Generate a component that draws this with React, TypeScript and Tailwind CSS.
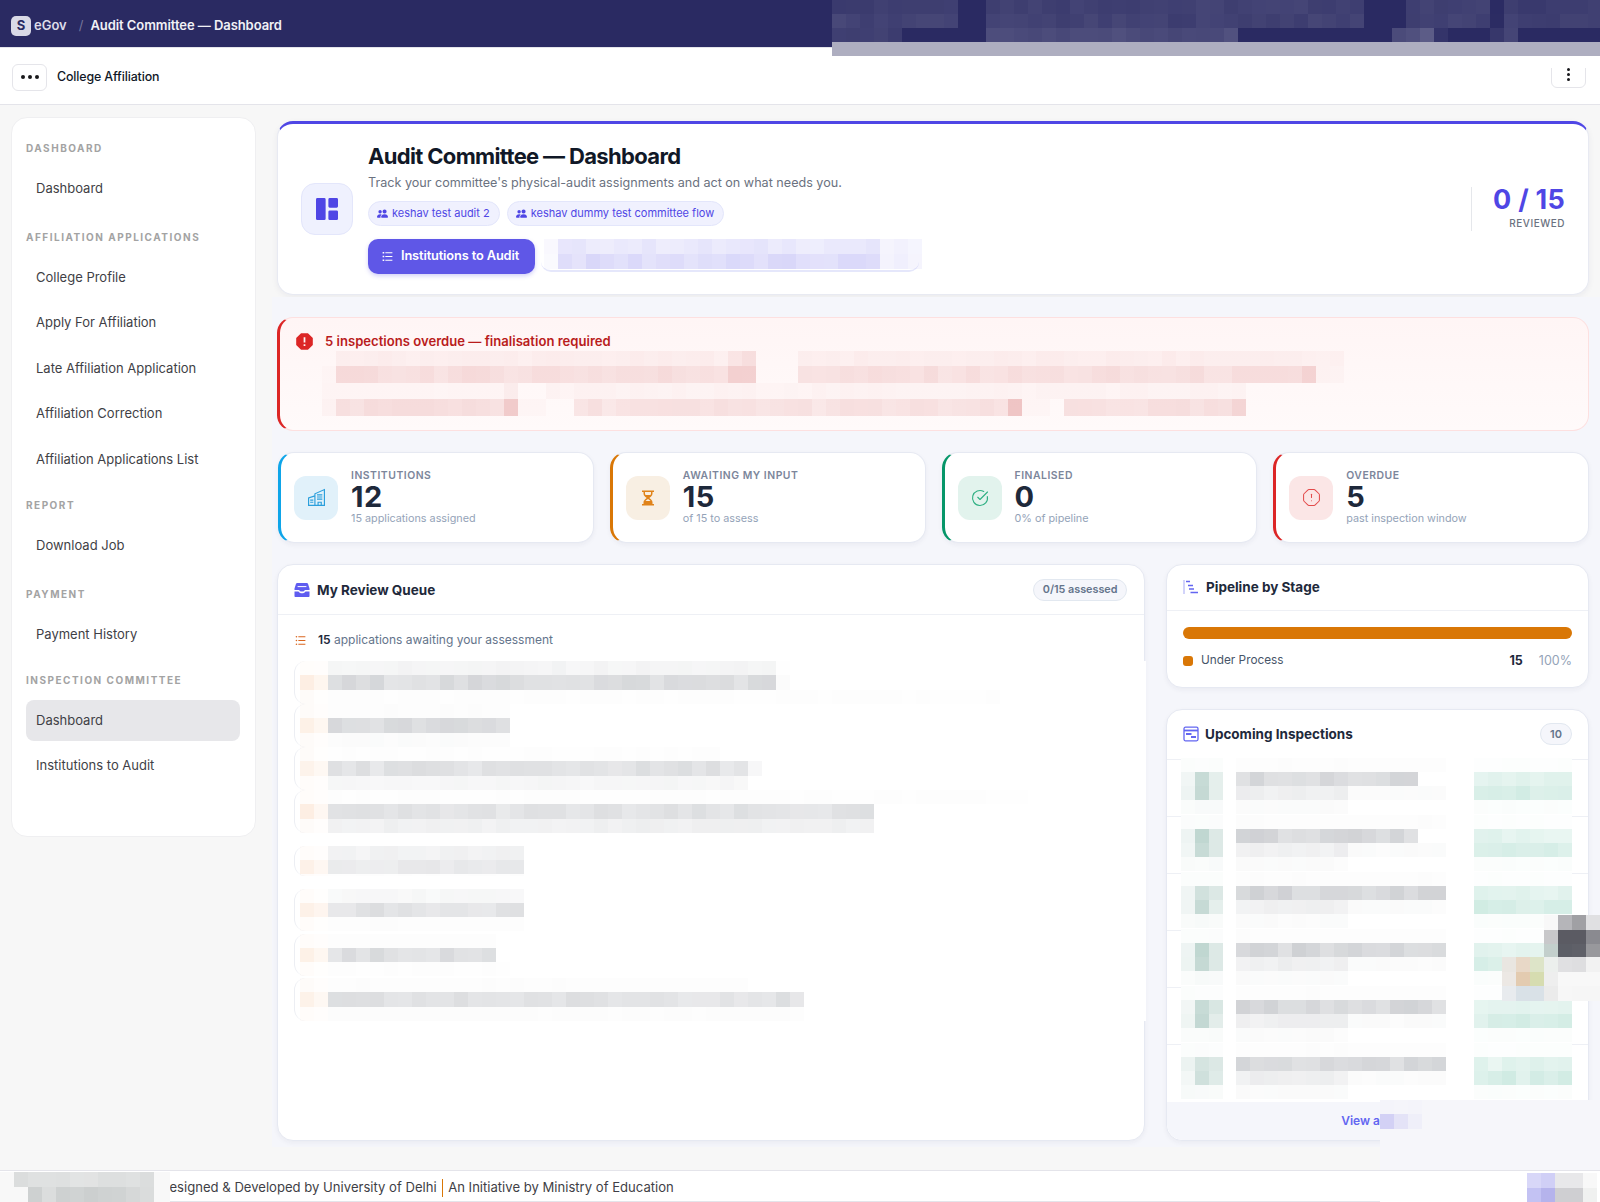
import { BsGrid1X2Fill, BsPeopleFill } from 'react-icons/bs'
import { RiHourglassFill, RiListCheck, RiListUnordered, RiSpam2Fill } from 'react-icons/ri'
import { CircleCheckBig, OctagonAlert } from 'lucide-react'

type Band = { h: number; runs: [number, number][] }

const noise = (n: number) => {
  const v = Math.sin(n * 12.9898) * 43758.5453
  return v - Math.floor(v)
}

// pixelated block, standing in for what is blurred out in the picture
function Mosaic({
  bands,
  rgb = '110,115,125',
  seed = 1,
  cell = 14
}: {
  bands: Band[]
  rgb?: string
  seed?: number
  cell?: number
}) {
  return (
    <div className="flex flex-col">
      {bands.map((band, b) => {
        let i = 0
        return (
          <div key={b} className="flex" style={{ height: band.h }}>
            {band.runs.flatMap(([count, alpha], r) =>
              Array.from({ length: count }).map((_, c) => {
                i += 1
                const a = alpha * (0.78 + 0.44 * noise(seed * 31 + b * 97 + i))
                return (
                  <div
                    key={`${r}-${c}`}
                    className="shrink-0"
                    style={{ width: cell, backgroundColor: `rgba(${rgb},${a})` }}
                  />
                )
              })
            )}
          </div>
        )
      })}
    </div>
  )
}

const menu = [
  { label: 'Dashboard', items: ['Dashboard'], top: 'mt-0' },
  {
    label: 'Affiliation Applications',
    items: [
      'College Profile',
      'Apply For Affiliation',
      'Late Affiliation Application',
      'Affiliation Correction',
      'Affiliation Applications List'
    ],
    top: 'mt-[20px]'
  },
  { label: 'Report', items: ['Download Job'], top: 'mt-[17px]' },
  { label: 'Payment', items: ['Payment History'], top: 'mt-[20px]' },
  {
    label: 'Inspection Committee',
    items: ['Dashboard', 'Institutions to Audit'],
    top: 'mt-[17px]',
    active: 0
  }
]

function Sidebar() {
  return (
    <aside className="h-[720px] w-[245px] shrink-0 rounded-2xl border border-[#efeff1] bg-white pl-[14px] pr-[15px] pt-[22px]">
      {menu.map((group) => (
        <div key={group.label} className={group.top}>
          <div className="mb-3 h-4 text-[10px] font-bold uppercase leading-4 tracking-[0.15em] text-[#a3a3a3]">
            {group.label}
          </div>
          <div className="flex flex-col gap-[4.5px]">
            {group.items.map((item, i) => (
              <div
                key={item}
                className={`flex h-[41px] items-center rounded-lg px-[10px] text-[13px] text-[#3f3f46] ${
                  group.active === i ? 'bg-[#e7e7ea]' : ''
                }`}
              >
                {item}
              </div>
            ))}
          </div>
        </div>
      ))}
    </aside>
  )
}

function Chip({ text }: { text: string }) {
  return (
    <span className="flex h-[25px] items-center gap-[4px] rounded-full border border-[#e3e6fb] bg-[#f0f1fe] pl-[8px] pr-[9px] text-[11px] text-[#4f46e5]">
      <BsPeopleFill className="h-[11px] w-[11px]" />
      {text}
    </span>
  )
}

function Hero() {
  return (
    <section className="flex h-[174px] items-center rounded-2xl border border-t-[3px] border-[#e8eaf2] border-t-[#4f46e5] bg-white pl-[23px] pr-[23px] shadow-[0_2px_6px_rgba(30,41,80,0.06)]">
      <div className="flex h-[52px] w-[52px] shrink-0 items-center justify-center rounded-[14px] border border-[#e3e6fb] bg-[#eff1fe] text-[#4f46e5]">
        <BsGrid1X2Fill className="h-[22px] w-[22px]" />
      </div>
      <div className="ml-[15px] flex h-full flex-col pt-[18px]">
        <h1 className="h-7 text-[22px] font-bold leading-7 tracking-[-0.03em] text-[#111827]">
          Audit Committee — Dashboard
        </h1>
        <p className="mt-[4px] h-[18px] text-[12.6px] leading-[18px] text-[#6b7280]">
          Track your committee's physical-audit assignments and act on what needs you.
        </p>
        <div className="mt-[9px] flex gap-[7px]">
          <Chip text="keshav test audit 2" />
          <Chip text="keshav dummy test committee flow" />
        </div>
        <div className="mt-[13px] flex">
          <button className="flex h-[35px] w-[167px] items-center gap-[7px] rounded-[10px] bg-[#5f57e7] pb-[1px] pl-[13px] text-[12.8px] font-semibold tracking-[-0.01em] text-white shadow-[0_2px_4px_rgba(79,70,229,0.25)]">
            <RiListCheck className="h-[13px] w-[13px]" />
            Institutions to Audit
          </button>
          <div className="ml-[6px] h-[33px] w-[378px] rounded-[10px] border-b-2 border-[#e5e7fb] pl-[3px]">
            <Mosaic
              rgb="79,70,229"
              seed={3}
              cell={14}
              bands={[
                { h: 15, runs: [[1, 0.03], [23, 0.12], [3, 0.06]] },
                { h: 15, runs: [[1, 0.03], [23, 0.18], [3, 0.07]] }
              ]}
            />
          </div>
        </div>
      </div>
      <div className="ml-auto h-[44px] w-[94px] border-l border-[#e5e7eb] text-right">
        <div className="-mt-[2px] text-[27px] font-bold leading-[30px] tracking-[0.01em] text-[#4f46e5]">
          0 / 15
        </div>
        <div className="text-[10px] font-medium uppercase leading-4 tracking-[0.05em] text-[#6b7280]">
          Reviewed
        </div>
      </div>
    </section>
  )
}

function Alert() {
  return (
    <section className="h-[114px] rounded-2xl border border-l-[3px] border-[#fde0e0] border-l-[#dc2626] bg-linear-to-b from-[#fff5f5] to-[#fffafa] pl-[14px] pr-4 pt-[14px]">
      <div className="flex h-[18px] items-center gap-[10px]">
        <RiSpam2Fill className="h-[21px] w-[21px] text-[#dc2626]" />
        <span className="text-[13.1px] font-semibold leading-[18px] text-[#b91c1c]">
          5 inspections overdue — finalisation required
        </span>
      </div>
      <div className="ml-[28px] mt-[1px]">
        <Mosaic
          rgb="200,70,70"
          seed={5}
          cell={14}
          bands={[
            { h: 15, runs: [[1, 0], [28, 0.05], [2, 0.12], [3, 0], [37, 0.05], [2, 0.03]] },
            { h: 17, runs: [[1, 0.02], [28, 0.14], [2, 0.24], [3, 0], [36, 0.13], [1, 0.22], [2, 0.03]] },
            { h: 16, runs: [[13, 0.02], [1, 0.08], [2, 0], [50, 0.03]] },
            { h: 17, runs: [[1, 0.03], [12, 0.15], [1, 0.28], [2, 0.02], [2, 0], [31, 0.12], [1, 0.24], [2, 0.02], [1, 0], [12, 0.13], [1, 0.2]] }
          ]}
        />
      </div>
    </section>
  )
}

const stats = [
  { label: 'Institutions', value: '12', sub: '15 applications assigned', border: 'border-l-[#0ea5e9]', box: 'bg-[#e1f1fa]', kind: 'building' },
  { label: 'Awaiting my input', value: '15', sub: 'of 15 to assess', border: 'border-l-[#d97706]', box: 'bg-[#f8efe3]', kind: 'hourglass' },
  { label: 'Finalised', value: '0', sub: '0% of pipeline', border: 'border-l-[#059669]', box: 'bg-[#e2f3ed]', kind: 'check' },
  { label: 'Overdue', value: '5', sub: 'past inspection window', border: 'border-l-[#dc2626]', box: 'bg-[#fbe6e6]', kind: 'alert' }
]

function BuildingIcon() {
  return (
    <svg viewBox="0 0 18 18" className="h-[19px] w-[19px]" fill="none" stroke="#2b9fdc" strokeWidth="1.1">
      <path d="M7.5 16.5V5.5L16.5 1.5V16.5H1.5V9.5L7.5 7.5" />
      <path d="M9.5 6.5H14.5M9.5 8.5H14.5M9.5 10.5H14.5M3 11.5H6M3 13.5H6M10.5 16.5V13.5H13.5V16.5" />
    </svg>
  )
}

function StatIcon({ kind }: { kind: string }) {
  if (kind === 'building') return <BuildingIcon />
  if (kind === 'hourglass') return <RiHourglassFill className="h-[18px] w-[18px] text-[#e0831a]" />
  if (kind === 'check') return <CircleCheckBig className="h-[18px] w-[18px] text-[#2fb083]" strokeWidth={1.5} />
  return <OctagonAlert className="h-[19px] w-[19px] text-[#e34b4b]" strokeWidth={1.3} />
}

function Stats() {
  return (
    <section className="ml-px grid grid-cols-4 gap-4">
      {stats.map((stat) => (
        <div
          key={stat.label}
          className={`flex h-[91px] items-center gap-[13px] rounded-2xl border border-l-[3px] border-[#e6e9f2] bg-white pl-[13px] shadow-[0_2px_5px_rgba(30,41,80,0.05)] ${stat.border}`}
        >
          <div className={`flex h-11 w-11 items-center justify-center rounded-xl ${stat.box}`}>
            <StatIcon kind={stat.kind} />
          </div>
          <div className="flex flex-col">
            <span className="h-[14px] text-[10.4px] font-semibold uppercase leading-[14px] tracking-[0.05em] text-[#7c869b]">
              {stat.label}
            </span>
            <span className="h-[28px] text-[29px] font-bold leading-[28px] tracking-[0.02em] text-[#1e293b]">
              {stat.value}
            </span>
            <span className="h-4 text-[10.8px] leading-4 text-[#94a3b8]">{stat.sub}</span>
          </div>
        </div>
      ))}
    </section>
  )
}

const queueRows: { top: string; bands: Band[] }[] = [
  { top: 'mt-0', bands: [{ h: 14, runs: [[32, 0.07], [1, 0.01]] }, { h: 15, runs: [[32, 0.24], [1, 0.03]] }, { h: 14, runs: [[48, 0.01]] }] },
  { top: 'mt-0', bands: [{ h: 14, runs: [[13, 0.015]] }, { h: 15, runs: [[13, 0.24]] }, { h: 14, runs: [[13, 0.025]] }] },
  { top: 'mt-0', bands: [{ h: 14, runs: [[28, 0.01]] }, { h: 15, runs: [[30, 0.2], [1, 0.05]] }, { h: 14, runs: [[30, 0.06]] }] },
  { top: 'mt-0', bands: [{ h: 14, runs: [[50, 0.01]] }, { h: 15, runs: [[39, 0.19]] }, { h: 14, runs: [[39, 0.1]] }] },
  { top: 'mt-[13px]', bands: [{ h: 14, runs: [[14, 0.09]] }, { h: 14, runs: [[14, 0.14]] }, { h: 2, runs: [[14, 0.01]] }] },
  { top: 'mt-[13px]', bands: [{ h: 14, runs: [[14, 0.05]] }, { h: 14, runs: [[14, 0.2]] }, { h: 14, runs: [[14, 0.015]] }] },
  { top: 'mt-[3px]', bands: [{ h: 14, runs: [[12, 0.015]] }, { h: 14, runs: [[12, 0.22]] }, { h: 14, runs: [[13, 0.01]] }] },
  { top: 'mt-[2px]', bands: [{ h: 14, runs: [[30, 0.015]] }, { h: 15, runs: [[34, 0.2]] }, { h: 14, runs: [[34, 0.02]] }] }
]

function Queue() {
  return (
    <section className="relative h-[577px] w-[868px] shrink-0 rounded-2xl border border-[#e6e9f2] bg-white shadow-[0_2px_5px_rgba(30,41,80,0.05)]">
      <header className="flex h-[50px] items-center justify-between border-b border-[#eef0f5] pl-4 pr-[17px] pt-px">
        <h2 className="flex items-center gap-[7px] text-[13.5px] font-bold text-[#1e293b]">
          <svg viewBox="0 0 16 16" className="h-4 w-4" fill="#5f5cf0">
            <path d="M3.2 1h9.6c.5 0 1 .3 1.2.8l1.5 4.7V8h-4.7a2.8 1.6 0 0 1-5.6 0H.5V6.5L2 1.8C2.2 1.3 2.7 1 3.2 1z" />
            <path d="M.5 9.5h4c.5 1.2 2 1.8 3.5 1.8s3-.6 3.5-1.8h4V14c0 .6-.4 1-1 1h-13c-.6 0-1-.4-1-1z" />
            <path d="M3.6 4.6h8.8" stroke="#fff" />
          </svg>
          My Review Queue
        </h2>
        <span className="flex h-[22px] items-center rounded-full border border-[#e2e8f0] bg-[#f5f6fb] px-[8.5px] text-[10.8px] font-semibold text-[#64748b]">
          0/15 assessed
        </span>
      </header>
      <div className="px-4 pt-4">
        <p className="flex h-[18px] items-center gap-[11px] text-[12px] leading-[18px] text-[#64748b]">
          <RiListUnordered className="h-[13px] w-[13px] text-[#d9661f]" />
          <span>
            <b className="font-semibold text-[#1e293b]">15</b> applications awaiting your assessment
          </span>
        </p>
        <div className="mt-[12px] flex flex-col">
          {queueRows.map((row, i) => (
            <div key={i} className={`flex rounded-l-xl border-l border-[#eceef3] pl-[5px] ${row.top}`}>
              <Mosaic
                rgb="240,150,80"
                seed={i + 20}
                bands={row.bands.map((b) => {
                  const strong = b.runs[0][1] >= 0.14
                  return { h: b.h, runs: [[1, strong ? 0.14 : 0.03], [1, strong ? 0.08 : 0.015]] as [number, number][] }
                })}
              />
              <Mosaic seed={i + 9} bands={row.bands} />
            </div>
          ))}
        </div>
      </div>
      <div className="absolute -right-[2px] top-[96px] h-[360px] w-[4px] bg-white" />
    </section>
  )
}

function Pipeline() {
  return (
    <section className="h-[124px] rounded-2xl border border-[#e6e9f2] bg-white shadow-[0_2px_5px_rgba(30,41,80,0.05)]">
      <header className="flex h-[46px] items-center gap-[7px] border-b border-[#eef0f5] pb-[1px] pl-4">
        <svg viewBox="0 0 16 16" className="h-4 w-4" fill="none" stroke="#6366f1">
          <path d="M1 1V15" stroke="#a5a8f5" />
          <path d="M3 2.5H7M5 6.5H10M6 10H11M7.5 13.5H15" strokeWidth="1.6" />
        </svg>
        <h2 className="text-[13.5px] font-bold text-[#1e293b]">Pipeline by Stage</h2>
      </header>
      <div className="px-4 pt-4">
        <div className="h-3 w-full rounded-full bg-[#d97706]" />
        <div className="mt-[14px] flex h-[16px] items-center text-[11.8px] text-[#475569]">
          <span className="mr-2 h-[10px] w-[10px] rounded-[3px] bg-[#d97706]" />
          Under Process
          <b className="ml-auto text-[12.5px] font-bold text-[#1e293b]">15</b>
          <span className="ml-4 text-[12.5px] text-[#94a3b8]">100%</span>
        </div>
      </div>
    </section>
  )
}

function Upcoming() {
  return (
    <section className="relative flex h-[432px] flex-col rounded-2xl border border-[#e6e9f2] bg-white shadow-[0_2px_5px_rgba(30,41,80,0.05)]">
      <header className="flex h-[50px] shrink-0 items-center justify-between border-b border-[#eef0f5] pb-[1px] pl-4 pr-4">
        <h2 className="flex items-center gap-[6px] text-[13.5px] font-bold text-[#1e293b]">
          <svg viewBox="0 0 16 16" className="h-4 w-4" fill="none" stroke="#6366f1" strokeWidth="1.3">
            <rect x="1" y="1.2" width="14" height="13.6" rx="1.5" />
            <path d="M1 4.5H15" strokeWidth="1.8" />
            <path d="M3 8H8.5M8 11H13" strokeWidth="1.8" />
          </svg>
          Upcoming Inspections
        </h2>
        <span className="flex h-[22px] w-[32px] items-center justify-center rounded-full border border-[#e2e8f0] bg-[#f5f6fb] text-[11px] font-semibold text-[#64748b]">
          10
        </span>
      </header>
      <div className="flex-1">
        {[0, 1, 2, 3, 4, 5].map((i) => (
          <div key={i} className="flex h-[57px] border-b border-[#eef0f5] pl-[14px] last:border-b-0">
            <div className="-mt-[2px] flex h-[59px] overflow-hidden bg-white">
              <Mosaic
                rgb="30,110,90"
                seed={i + 40}
                bands={[
                  { h: 14, runs: [[3, 0.015]] },
                  { h: 14, runs: [[1, 0.07], [1, 0.24], [1, 0.14]] },
                  { h: 14, runs: [[1, 0.07], [1, 0.24], [1, 0.14]] },
                  { h: 14, runs: [[3, 0.03]] }
                ]}
              />
              <div className="w-[13px]" />
              <Mosaic
                seed={i + 50}
                bands={[
                  { h: 14, runs: [[15, 0.015]] },
                  { h: 14, runs: [[13 + (i > 1 ? 2 : 0), 0.27]] },
                  { h: 14, runs: [[8, 0.11], [7, 0.03]] },
                  { h: 14, runs: [[8, 0.03]] }
                ]}
              />
              <div className="w-[28px]" />
              <Mosaic
                rgb="30,160,120"
                seed={i + 60}
                bands={[
                  { h: 14, runs: [[7, 0.01]] },
                  { h: 14, runs: [[7, 0.12]] },
                  { h: 14, runs: [[7, 0.17]] },
                  { h: 14, runs: [[7, 0.02]] }
                ]}
              />
            </div>
          </div>
        ))}
      </div>
      <footer className="flex h-[38px] shrink-0 items-center justify-center gap-4 rounded-b-2xl bg-[#f5f6fb] text-[12px] font-semibold text-[#6366f1]">
        <span>View all</span>
        <span>→</span>
      </footer>
    </section>
  )
}

const patches: { cls: string; bg: string[][] }[] = [
  {
    cls: 'left-[1544px] top-[915px]',
    bg: [
      ['#f8f8f8', '#b5b5b9', '#a0a0a4', '#e0e0e2'],
      ['#c8c8ca', '#5b5b63', '#5b5b63', '#8a8a90'],
      ['#c3cfcc', '#5c5e66', '#5f6068', '#98989c']
    ]
  },
  {
    cls: 'left-[1502px] top-[957px]',
    bg: [
      ['#e9e6e1', '#e8d8c7', '#dde4c8', '#ecefed', '#e0e0e2', '#dedee0', '#f2f2f2'],
      ['#ece8e4', '#e3cbb0', '#d6dcb0', '#eeeeee', '#f8f8f8', '#f8f8f8', '#f8f8f8'],
      ['#e8ebee', '#d9e1e7', '#d9e1e7', '#ebebeb', '#f7f7f7', '#f6f6f6', '#f6f6f6']
    ]
  },
  {
    cls: 'left-[1527px] top-[1173px]',
    bg: [
      ['#d8d7f8', '#d0cff6', '#e8e8ea', '#e8e8ea', '#f8f8f8', '#ffffff'],
      ['#c3c2f3', '#b5b3ec', '#cfcfd2', '#cfcfd2', '#f0f1f0', '#ffffff']
    ]
  }
]

export default function App() {
  return (
    <div className="relative h-[1202px] overflow-hidden bg-[#f7f7f7] font-['Inter',sans-serif]">
      <div className="flex h-[47px] items-center bg-[#2a2a62] pl-[11px] pt-[4px] text-[13px] font-semibold">
        <span className="flex h-5 w-5 items-center justify-center rounded-[5px] bg-[#d9d9e6] text-[13px] font-bold text-[#2a2a62]">
          S
        </span>
        <span className="ml-[3px] text-[#dcdce8]">eGov</span>
        <span className="ml-[12px] font-normal text-[#77779c]">/</span>
        <span className="ml-[7px] tracking-[-0.005em] text-[#f1f1f6]">Audit Committee — Dashboard</span>
      </div>
      <div className="flex h-[58px] items-center justify-between border-y border-[#e4e4ea] bg-white pl-3 pr-[14px]">
        <div className="mt-[2px] flex items-center gap-[10px]">
          <button className="flex h-[27px] w-[35px] items-center justify-center gap-[3px] rounded-md border border-[#e5e5ea] bg-white">
            <span className="h-1 w-1 rounded-full bg-[#18181b]" />
            <span className="h-1 w-1 rounded-full bg-[#18181b]" />
            <span className="h-1 w-1 rounded-full bg-[#18181b]" />
          </button>
          <span className="text-[12.4px] font-medium tracking-[-0.01em] text-[#111827]">College Affiliation</span>
        </div>
        <button className="mb-[3px] flex h-[27px] w-[35px] flex-col items-center justify-center gap-[2px] rounded-md border border-[#e5e5ea] bg-white">
          <span className="h-[3px] w-[3px] rounded-full bg-[#18181b]" />
          <span className="h-[3px] w-[3px] rounded-full bg-[#18181b]" />
          <span className="h-[3px] w-[3px] rounded-full bg-[#18181b]" />
        </button>
      </div>

      <div className="flex h-[1065px] items-start">
        <div className="pl-[11px] pt-3">
          <Sidebar />
        </div>
        <main className="ml-[21px] min-w-0 flex-1 pr-[11px] pt-4">
          <Hero />
          <div className="-mr-[11px] ml-[-5px] mt-[2px] bg-[#f5f6fb] pb-[6px] pl-[5px] pr-[11px] pt-5">
            <Alert />
            <div className="mt-[21px]">
              <Stats />
            </div>
            <div className="mt-[21px] flex gap-[21px]">
              <Queue />
              <div className="flex flex-1 flex-col gap-[21px]">
                <Pipeline />
                <Upcoming />
              </div>
            </div>
          </div>
        </main>
      </div>

      <footer className="flex h-[32px] items-center border-y border-[#e4e4ea] bg-white pl-[160px] pt-[4px] text-[13.1px] text-[#3f3f46]">
        <span>Designed &amp; Developed by University of Delhi</span>
        <span className="mx-[5px] h-[18px] w-[1.5px] bg-[#d97706]" />
        <span>An Initiative by Ministry of Education</span>
      </footer>

      {/* blurred-out parts of the capture */}
      <div className="absolute left-[832px] top-0 w-[768px]">
        <Mosaic
          rgb="255,255,255"
          seed={2}
          bands={[
            { h: 14, runs: [[9, 0.1], [2, 0], [27, 0.11], [3, 0], [6, 0.1], [1, 0.01], [7, 0.09]] },
            { h: 14, runs: [[9, 0.12], [2, 0], [27, 0.11], [3, 0], [6, 0.11], [1, 0.01], [7, 0.1]] },
            { h: 14, runs: [[5, 0.11], [6, 0], [18, 0.16], [11, 0], [3, 0.2], [1, 0.06], [3, 0], [1, 0.06], [1, 0.12], [6, 0]] }
          ]}
        />
        <div className="h-[14px] bg-[#aeaec0]" />
        <div className="h-[12px] bg-white" />
      </div>
      <div className="absolute left-[1380px] top-[1100px] h-[70px] w-[220px] bg-[#f6f6fa]">
        <Mosaic
          rgb="99,90,230"
          seed={7}
          bands={[
            { h: 14, runs: [[3, 0.01]] },
            { h: 15, runs: [[1, 0.2], [1, 0.15], [1, 0.05]] }
          ]}
        />
      </div>
      <div className="absolute left-0 top-[1172px] h-[30px] w-[170px] bg-[#f8f8f8]">
        <Mosaic
          rgb="110,120,120"
          seed={11}
          bands={[
            { h: 15, runs: [[1, 0], [10, 0.18]] },
            { h: 15, runs: [[2, 0], [9, 0.26]] }
          ]}
        />
      </div>
      <div className="absolute left-[1380px] top-[1171px] h-[31px] w-[150px] bg-white" />
      {patches.map((patch, p) => (
        <div key={p} className={`absolute flex flex-col ${patch.cls}`}>
          {patch.bg.map((line, l) => (
            <div key={l} className="flex h-[14.5px]">
              {line.map((color, c) => (
                <div key={c} className="w-[14px]" style={{ backgroundColor: color }} />
              ))}
            </div>
          ))}
        </div>
      ))}
    </div>
  )
}
